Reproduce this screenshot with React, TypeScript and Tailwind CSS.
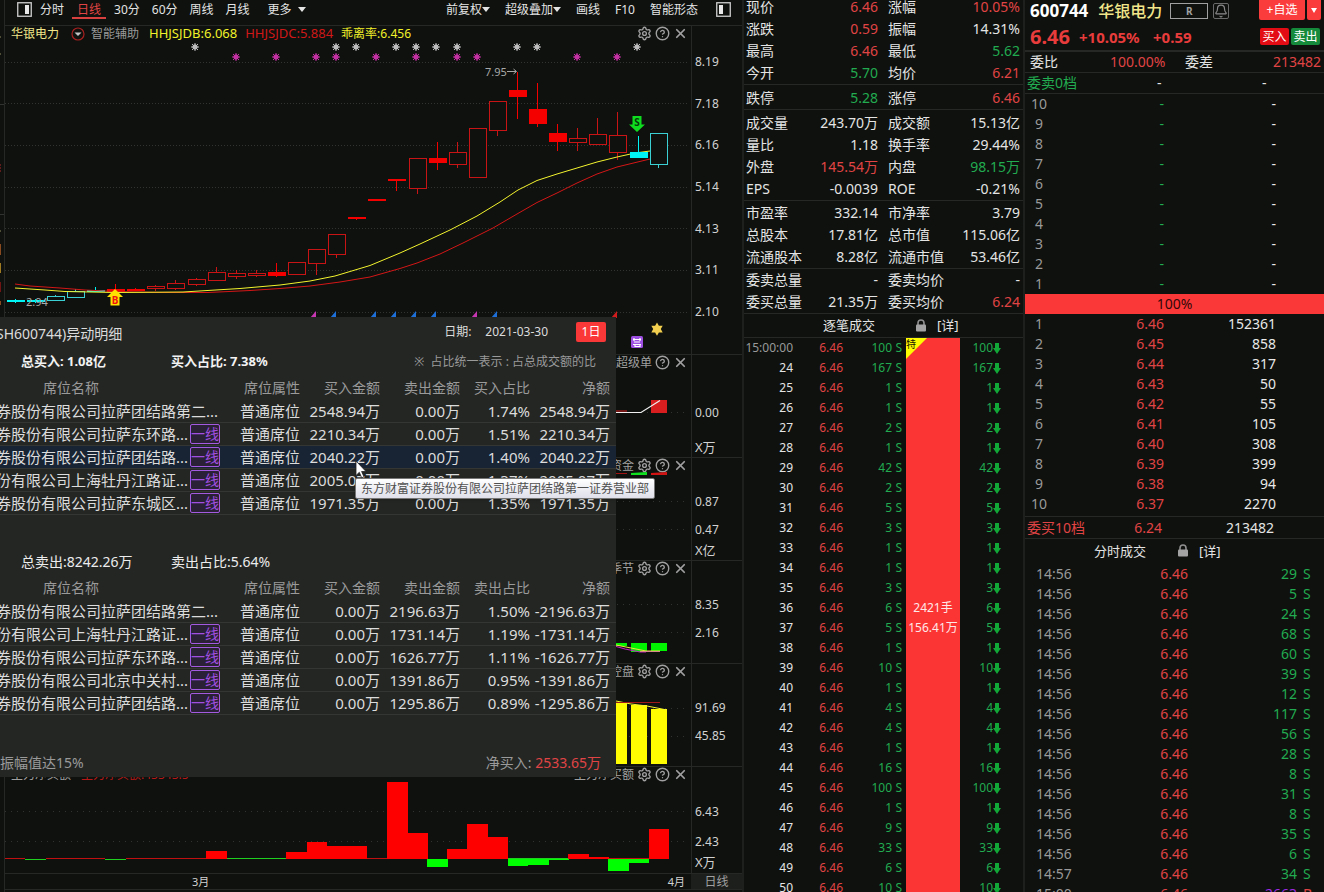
import React from "react";
import { Bell, HelpCircle, Settings, X } from "lucide-react";

type Tone = "red" | "green" | "white";

const toneClass: Record<Tone, string> = {
  red: "text-[#e04444]",
  green: "text-[#22ab50]",
  white: "text-[#e4e4e4]",
};

/* ---------- small shared drawings ---------- */

function Caret() {
  return (
    <svg viewBox="0 0 8 5" className="h-[5px] w-2" aria-hidden="true">
      <path d="M0 0h8L4 5z" fill="currentColor" />
    </svg>
  );
}

function Lock() {
  return (
    <svg viewBox="0 0 12 13" className="h-[13px] w-3" aria-hidden="true">
      <path d="M3 6V4a3 3 0 0 1 6 0v2" fill="none" stroke="#8f8f8f" strokeWidth="1.6" />
      <rect x="1" y="5.5" width="10" height="7" rx="1" fill="#a3a3a3" />
    </svg>
  );
}

function PanelIcon({ side }: { side: "left" | "right" }) {
  return (
    <svg viewBox="0 0 15 15" className="h-[15px] w-[15px]" aria-hidden="true">
      <rect x="0.75" y="0.75" width="13.5" height="13.5" fill="none" stroke="#cfcfcf" strokeWidth="1.3" />
      <rect x={side === "right" ? 8 : 3} y="3" width="4" height="9" fill="#e8e8e8" />
    </svg>
  );
}

/* ---------- chart panes ---------- */

function PaneHeader({
  title,
  gear = true,
  children,
}: {
  title?: string;
  gear?: boolean;
  children?: React.ReactNode;
}) {
  return (
    <div className="flex h-[15px] items-center justify-between pl-1.5 pr-[3px] text-xs leading-[15px] text-[#a0a0a0]">
      <div className="flex items-center gap-2.5 whitespace-nowrap">{children}</div>
      <div className="flex items-center gap-[3px]">
        {title && <span>{title}</span>}
        {gear && (
          <button aria-label="设置">
            <Settings className="h-[15px] w-[15px]" strokeWidth={2.2} />
          </button>
        )}
        <button aria-label="帮助">
          <HelpCircle className="h-[15px] w-[15px]" strokeWidth={2.2} />
        </button>
        <button aria-label="关闭">
          <X className="h-[15px] w-[15px]" strokeWidth={2.8} />
        </button>
      </div>
    </div>
  );
}

function Grid({ ys, dash = "1 2" }: { ys: number[]; dash?: string }) {
  return (
    <g stroke="#303330" strokeDasharray={dash} shapeRendering="crispEdges">
      {ys.map((y) => (
        <line key={y} x1="5" x2="689" y1={y + 0.5} y2={y + 0.5} />
      ))}
    </g>
  );
}

type Candle = { x: number; t: number; b: number; hi?: number; lo?: number; fill?: boolean; c?: boolean };

const candles: Candle[] = [
  { x: 7, t: 300, b: 302, hi: 299, lo: 303, fill: true, c: true },
  { x: 27, t: 300, b: 302, hi: 299, lo: 303, fill: true, c: true },
  { x: 47, t: 296, b: 300, hi: 295, c: true },
  { x: 67, t: 291, b: 297, hi: 289, c: true },
  { x: 87, t: 290, b: 292, hi: 287, fill: true, c: true },
  { x: 107, t: 289, b: 292, hi: 284, fill: true },
  { x: 127, t: 289, b: 291, hi: 288, fill: true },
  { x: 147, t: 286, b: 288, hi: 285, lo: 291 },
  { x: 167, t: 283, b: 288, hi: 280, lo: 290 },
  { x: 188, t: 279, b: 284, hi: 278, lo: 286 },
  { x: 208, t: 272, b: 280, hi: 267 },
  { x: 228, t: 273, b: 276, hi: 270, lo: 279 },
  { x: 248, t: 273, b: 275, hi: 270, lo: 277 },
  { x: 268, t: 272, b: 276, hi: 263, lo: 277, fill: true },
  { x: 288, t: 262, b: 274 },
  { x: 308, t: 249, b: 263, lo: 275 },
  { x: 328, t: 234, b: 254, lo: 258 },
  { x: 348, t: 217, b: 219, lo: 220, fill: true },
  { x: 368, t: 199, b: 201, fill: true },
  { x: 388, t: 179, b: 181, lo: 191, fill: true },
  { x: 409, t: 158, b: 188, lo: 194 },
  { x: 429, t: 158, b: 163, hi: 142, lo: 170, fill: true },
  { x: 449, t: 152, b: 164, hi: 142, lo: 168 },
  { x: 469, t: 128, b: 177 },
  { x: 489, t: 101, b: 130, lo: 136 },
  { x: 509, t: 90, b: 97, hi: 72, lo: 119, fill: true },
  { x: 529, t: 109, b: 124, hi: 83, lo: 127, fill: true },
  { x: 549, t: 133, b: 142, hi: 124, lo: 151, fill: true },
  { x: 569, t: 138, b: 142, hi: 128, lo: 151 },
  { x: 589, t: 134, b: 144, hi: 118 },
  { x: 609, t: 135, b: 152, hi: 112, lo: 160 },
  { x: 630, t: 152, b: 158, hi: 136, fill: true, c: true },
  { x: 650, t: 133, b: 164, lo: 168, c: true },
];

const grayStars = [195, 336, 356, 396, 416, 436, 457, 517, 537, 637];
const pinkStars = [236, 276, 316, 336, 376, 416, 457, 477, 577, 617];
const flags: [number, string][] = [
  [314, "#c536b0"],
  [334, "#1e70d8"],
  [374, "#1e70d8"],
  [394, "#1e70d8"],
  [414, "#1e70d8"],
  [434, "#1e70d8"],
  [475, "#c536b0"],
  [495, "#1e70d8"],
  [615, "#d01c1c"],
];

function Burst({ x, y, color }: { x: number; y: number; color: string }) {
  return (
    <g stroke={color} strokeWidth="1">
      <path d={`M${x - 4} ${y}h8M${x} ${y - 4}v8M${x - 3} ${y - 3}l6 6M${x + 3} ${y - 3}l-6 6`} />
      <circle cx={x} cy={y} r="2.2" fill={color} />
    </g>
  );
}

function CandleChart() {
  return (
    <svg viewBox="5 41 686 313" className="block h-[313px] w-full overflow-visible">
      <Grid ys={[62, 103, 145, 187, 228, 270, 312]} />
      {grayStars.map((x) => (
        <Burst key={x} x={x} y={47} color="#bdbdbd" />
      ))}
      {pinkStars.map((x) => (
        <Burst key={x} x={x} y={57} color="#c530a4" />
      ))}
      <g shapeRendering="crispEdges">
        {candles.map((k) => {
          const color = k.c ? (k.fill ? "#00f4f4" : "#3ad0d4") : k.fill ? "#f40000" : "#c81414";
          const mid = k.x + 8.5;
          return (
            <g key={k.x} stroke={color}>
              {k.hi !== undefined && <line x1={mid} x2={mid} y1={k.hi} y2={k.t} />}
              {k.lo !== undefined && <line x1={mid} x2={mid} y1={k.b} y2={k.lo} />}
              {k.fill ? (
                <rect x={k.x} y={k.t} width="18" height={k.b - k.t} fill={color} stroke="none" />
              ) : (
                <rect x={k.x + 0.5} y={k.t + 0.5} width="17" height={k.b - k.t} fill="#0e110e" />
              )}
            </g>
          );
        })}
      </g>
      <polyline
        points="15,284 30,286 60,288 85,290 115,291.5 160,292.5 208,292.5 250,290.5 280,288.5 310,286 340,282 370,277 400,268.5 417,263 440,254 463,243 493,228 517,214 537,202.5 557,193 577,183 597,174 617,167 650,159"
        fill="none"
        stroke="#d41616"
        strokeWidth="1"
      />
      <polyline
        points="15,288 45,290 65,291.500 115,292.5 183,292 240,288.500 280,285 310,281 335,276 355,270 370,265.5 400,253 420,244 450,230 477,216 500,202 518,190 537,180.5 557,174 577,168 597,162 617,157 635,153 650,151"
        fill="none"
        stroke="#f4f42e"
        strokeWidth="1"
      />
      <path d="M630 152h18v6h-18z" fill="#00f4f4" />
      <path d="M650.500 133.500h17v31h-17z" fill="#0e110e" stroke="#3ad0d4" shapeRendering="crispEdges" />
      <text x="26" y="306" fontSize="11" fill="#a8a8a8">2.94</text>
      <text x="485" y="76" fontSize="11" fill="#a8a8a8">7.95</text>
      <path d="M507 71.500h9M513.500 69l3 2.500l-3 2.500" fill="none" stroke="#a8a8a8" />
      <path d="M115 289l8 8h-3.500v8.500h-9V297H107z" fill="#ffe000" />
      <text x="115" y="304" fontSize="10" fontWeight="700" textAnchor="middle" fill="#f01010">B</text>
      <path d="M632.500 116h9v8.500h3.500l-8 7.500l-8-7.500h3.500z" fill="#0fdc1e" />
      <text x="637" y="125.500" fontSize="10" fontWeight="700" textAnchor="middle" fill="#06380c">S</text>
      {flags.map(([x, color]) => (
        <path key={x} d={`M${x - 4} 318l6 -7v7z`} fill={color} />
      ))}
      <rect x="631" y="336" width="12" height="12" rx="1.500" fill="#9c4fe0" />
      <path d="M633 339.500h8M634 342h6M633 344.500h8M634 338v3M640 338v3M635 344v2.500h5V344" fill="none" stroke="#fff" strokeWidth="1.200" />
      <path d="M657 322.500l1.900 3.300h3.800l-1.900 3.300l1.900 3.300h-3.800l-1.900 3.300l-1.900-3.300h-3.800l1.900-3.300l-1.900-3.300h3.800z" fill="#f2cf4e" />
    </svg>
  );
}

function SuperOrderChart() {
  return (
    <svg viewBox="5 370 686 87" className="block h-[87px] w-full overflow-visible">
      <Grid ys={[412]} dash="1 5" />
      <rect x="651" y="400" width="16" height="13" fill="#d81e1e" />
      <path d="M600 411h27" stroke="#d81e1e" />
      <path d="M600 412.500h41l19-12" fill="none" stroke="#f0f0f0" strokeWidth="1.200" />
    </svg>
  );
}

function FundChart() {
  return (
    <svg viewBox="5 473 686 87" className="block h-[87px] w-full overflow-visible">
      <Grid ys={[501, 529]} dash="1 5" />
      <path d="M600 473.500h27" stroke="#a01414" />
      <path d="M631 473l16-1v3h-16z" fill="#10e020" />
      <path d="M651 473l16-1v3h-16z" fill="#d01414" />
    </svg>
  );
}

function SeasonChart() {
  return (
    <svg viewBox="5 576 686 87" className="block h-[87px] w-full overflow-visible">
      <Grid ys={[604, 632]} dash="1 5" />
      <path d="M611 643h16v3h-16zM631 643h16v9h-16zM651 643h16v8h-16z" fill="#00f400" />
      <path d="M611 645l14 4l15 3h6" fill="none" stroke="#c020c0" strokeWidth="1.200" />
      <path d="M611 644l20 4l15 3h14" fill="none" stroke="#e8e040" strokeWidth="1.200" />
      <path d="M640 651.500h20" stroke="#d88a8a" />
    </svg>
  );
}

function ControlChart() {
  return (
    <svg viewBox="5 679 686 87" className="block h-[87px] w-full overflow-visible">
      <Grid ys={[708, 736]} dash="1 5" />
      <path d="M611 703h16v61h-16zM631 705h16v59h-16zM651 709h16v55h-16z" fill="#fffb00" />
      <path d="M611 700l20 4l16 2l20 4" fill="none" stroke="#f4f42e" />
      <path d="M611 702.500h49" stroke="#a01818" />
    </svg>
  );
}

const netBars: { x: number; w: number; y: number; h: number; up: boolean }[] = [
  { x: 206, w: 21, y: 851, h: 8, up: true },
  { x: 286, w: 21, y: 852, h: 7, up: true },
  { x: 307, w: 20, y: 842, h: 17, up: true },
  { x: 327, w: 40, y: 846, h: 13, up: true },
  { x: 387, w: 21, y: 782, h: 77, up: true },
  { x: 408, w: 20, y: 833, h: 26, up: true },
  { x: 427, w: 21, y: 859, h: 8, up: false },
  { x: 447, w: 20, y: 849, h: 10, up: true },
  { x: 467, w: 21, y: 824, h: 35, up: true },
  { x: 488, w: 20, y: 837, h: 22, up: true },
  { x: 508, w: 20, y: 859, h: 7, up: false },
  { x: 528, w: 21, y: 859, h: 6, up: false },
  { x: 549, w: 20, y: 859, h: 1, up: false },
  { x: 568, w: 21, y: 854, h: 5, up: true },
  { x: 589, w: 20, y: 857, h: 2, up: true },
  { x: 608, w: 21, y: 859, h: 12, up: false },
  { x: 629, w: 20, y: 859, h: 4, up: false },
  { x: 649, w: 20, y: 829, h: 30, up: true },
];

function NetBuyChart() {
  return (
    <svg viewBox="5 782 686 91" className="block h-[91px] w-full overflow-visible">
      <Grid ys={[811, 841]} dash="1 5" />
      <path d="M5 858.500h20M46 858.500h59M126 858.500h101M267 858.500h160M447 858.500h61M568 858.500h101" stroke="#c01010" shapeRendering="crispEdges" />
      <path d="M25 859.500h21M105 859.500h21M227 858.500h60M508 858.500h60" stroke="#20d020" shapeRendering="crispEdges" />
      <g shapeRendering="crispEdges">
        {netBars.map((b) => (
          <rect key={b.x} x={b.x} y={b.y} width={b.w} height={b.h} fill={b.up ? "#ff0000" : "#00ff00"} />
        ))}
      </g>
    </svg>
  );
}

function Pane({ children, axis }: { children: React.ReactNode; axis: React.ReactNode }) {
  return (
    <section className="flex border-b border-[#262826]">
      <div className="min-w-0 flex-1">{children}</div>
      <div className="flex w-[51px] flex-col border-l border-[#262826] pl-[3px] text-xs leading-5 text-[#d2d2d2]">
        {axis}
      </div>
    </section>
  );
}

const priceScale = ["8.19", "7.18", "6.16", "5.14", "4.13", "3.11", "2.10"];

function ChartColumn() {
  return (
    <main className="relative flex min-w-0 flex-1">
      <div className="w-[5px] shrink-0 border-r border-[#262826]">
        <svg viewBox="0 0 4 310" className="block h-[310px] w-1" aria-hidden="true">
          <path d="M0 104.500h4M0 214.500h4" stroke="#303330" />
          <path d="M0 165h1M0 168h1M0 171h1" stroke="#b02828" />
          <path d="M0 37h1M0 54h1M0 231h1" stroke="#909060" />
          <path d="M0 244h1v11H0z" fill="#8a4a20" />
          <path d="M0 263h1v10H0z" fill="#a07a20" />
          <path d="M0 282h1v10H0z" fill="#701414" />
          <path d="M0 301h1v4H0z" fill="#8a4a20" />
        </svg>
      </div>
      <div className="min-w-0 flex-1">
        <nav className="flex h-[26px] justify-between border-b border-[#262826] pb-1.5 pl-3 pr-[11px] text-xs leading-[19px] text-[#e4e4e4]">
          <div className="flex items-center gap-3">
            <button aria-label="左侧栏" className="-mr-1">
              <PanelIcon side="right" />
            </button>
            <button>分时</button>
            <button className="-mx-1 h-[19px] border-b-2 border-[#d84040] px-[5px] text-[#e04444]">日线</button>
            <button>30分</button>
            <button>60分</button>
            <button>周线</button>
            <button>月线</button>
            <button className="ml-1.5 flex items-center gap-1.5">
              更多
              <Caret />
            </button>
          </div>
          <div className="flex items-center gap-[15px]">
            <button className="flex items-center">
              前复权
              <Caret />
            </button>
            <button className="flex items-center">
              超级叠加
              <Caret />
            </button>
            <button>画线</button>
            <button>F10</button>
            <button>智能形态</button>
            <button aria-label="右侧栏" className="ml-[3px]">
              <PanelIcon side="left" />
            </button>
          </div>
        </nav>

        <Pane
          axis={
            <div className="flex h-[296px] flex-col justify-between pt-[26px]">
              {priceScale.map((p) => (
                <span key={p}>{p}</span>
              ))}
            </div>
          }
        >
          <PaneHeader>
            <span className="text-[#f2e68a]">华银电力</span>
            <svg viewBox="0 0 14 14" className="ml-0.5 h-3.5 w-3.5" aria-hidden="true">
              <circle cx="7" cy="7" r="6" fill="none" stroke="#a82020" strokeWidth="1.200" />
              <path d="M3.500 5.500h7L7 9z" fill="#c4c4c4" />
            </svg>
            <span className="-ml-1 text-[#9a9a9a]">智能辅助</span>
            <span className="text-[13px] text-[#f2f22a]">HHJSJDB:6.068</span>
            <span className="-ml-0.5 text-[13px] text-[#d01818]">HHJSJDC:5.884</span>
            <span className="-ml-0.5 text-[#f2f22a]">乖离率:6.456</span>
          </PaneHeader>
          <CandleChart />
        </Pane>

        <Pane axis={<><span className="pt-12">0.00</span><span className="pt-3.5 text-[13px]">X万</span></>}>
          <PaneHeader title="超级单" gear={false} />
          <SuperOrderChart />
        </Pane>

        <Pane
          axis={
            <>
              <span className="pt-[34px]">0.87</span>
              <span className="pt-2">0.47</span>
              <span className="text-[13px]">X亿</span>
            </>
          }
        >
          <PaneHeader title="资金" />
          <FundChart />
        </Pane>

        <Pane axis={<><span className="pt-[34px]">8.35</span><span className="pt-2">2.16</span></>}>
          <PaneHeader title="季节" />
          <SeasonChart />
        </Pane>

        <Pane axis={<><span className="pt-[34px]">91.69</span><span className="pt-2">45.85</span></>}>
          <PaneHeader title="控盘" />
          <ControlChart />
        </Pane>

        <Pane
          axis={
            <>
              <span className="pt-[35px]">6.43</span>
              <span className="pt-2.5">2.43</span>
              <span className="text-[13px]">X万</span>
            </>
          }
        >
          <PaneHeader title="主力净买额">
            <span>主力净买额</span>
            <span className="text-[#b81818]">主力净买额:43343.5</span>
          </PaneHeader>
          <NetBuyChart />
        </Pane>

        <div className="flex h-4 border-b border-[#262826] text-[11px] leading-4 text-[#d2d2d2]">
          <div className="flex flex-1 justify-between pl-[187px] pr-1.5">
            <span>3月</span>
            <span>4月</span>
          </div>
          <button className="w-[51px] bg-[#1d1f1d] text-xs leading-4 text-[#a0a0a0]">日线</button>
        </div>
      </div>
      <SeatPopup />
    </main>
  );
}

/* ---------- broker seat popup ---------- */

type Seat = { name: string; tag?: boolean; buy: string; sell: string; pct: string; net: string; active?: boolean };

const buySeats: Seat[] = [
  { name: "券股份有限公司拉萨团结路第二...", buy: "2548.94万", sell: "0.00万", pct: "1.74%", net: "2548.94万" },
  { name: "券股份有限公司拉萨东环路...", tag: true, buy: "2210.34万", sell: "0.00万", pct: "1.51%", net: "2210.34万" },
  { name: "券股份有限公司拉萨团结路...", tag: true, buy: "2040.22万", sell: "0.00万", pct: "1.40%", net: "2040.22万", active: true },
  { name: "份有限公司上海牡丹江路证...", tag: true, buy: "2005.07万", sell: "0.00万", pct: "1.37%", net: "2005.07万" },
  { name: "券股份有限公司拉萨东城区...", tag: true, buy: "1971.35万", sell: "0.00万", pct: "1.35%", net: "1971.35万" },
];

const sellSeats: Seat[] = [
  { name: "券股份有限公司拉萨团结路第二...", buy: "0.00万", sell: "2196.63万", pct: "1.50%", net: "-2196.63万" },
  { name: "份有限公司上海牡丹江路证...", tag: true, buy: "0.00万", sell: "1731.14万", pct: "1.19%", net: "-1731.14万" },
  { name: "券股份有限公司拉萨东环路...", tag: true, buy: "0.00万", sell: "1626.77万", pct: "1.11%", net: "-1626.77万" },
  { name: "券股份有限公司北京中关村...", tag: true, buy: "0.00万", sell: "1391.86万", pct: "0.95%", net: "-1391.86万" },
  { name: "券股份有限公司拉萨团结路...", tag: true, buy: "0.00万", sell: "1295.86万", pct: "0.89%", net: "-1295.86万" },
];

function SeatTable({ seats, pctLabel }: { seats: Seat[]; pctLabel: string }) {
  return (
    <table className="-ml-1 w-[620px] table-fixed border-separate border-spacing-0 whitespace-nowrap text-right text-[15px] leading-[22px] text-[#dcdcdc]">
      <colgroup>
        <col className="w-[225px]" />
        <col className="w-[79px]" />
        <col className="w-20" />
        <col className="w-20" />
        <col className="w-[70px]" />
        <col />
      </colgroup>
      <thead>
        <tr className="h-6 text-sm text-[#9a9a9a]">
          <th className="pr-[75px] text-center font-normal">席位名称</th>
          <th className="font-normal">席位属性</th>
          <th className="font-normal">买入金额</th>
          <th className="font-normal">卖出金额</th>
          <th className="font-normal">{pctLabel}</th>
          <th className="pr-1.5 font-normal">净额</th>
        </tr>
      </thead>
      <tbody className="[&_td]:border-b [&_td]:border-[#333633]">
        {seats.map((s) => (
          <tr key={s.name} className={s.active ? "h-[23px] bg-[#182434]" : "h-[23px]"}>
            <td>
              <div className="flex items-center gap-0.5">
                <span>{s.name}</span>
                {s.tag && (
                  <span className="h-5 w-[30px] rounded-[2px] border border-[#a45ae0] bg-[#2b2136] text-center text-sm leading-[18px] text-[#a04fe0]">
                    一线
                  </span>
                )}
              </div>
            </td>
            <td>普通席位</td>
            <td>{s.buy}</td>
            <td>{s.sell}</td>
            <td>{s.pct}</td>
            <td className="pr-1.5">{s.net}</td>
          </tr>
        ))}
      </tbody>
    </table>
  );
}

function SeatPopup() {
  return (
    <div role="dialog" aria-label="异动明细" className="absolute left-0 top-[317px] w-[616px] bg-[#242624]">
      <div className="overflow-hidden">
        <header className="flex h-[30px] items-center justify-between pr-2.5">
          <h2 className="-ml-1 pt-1 text-sm text-[#dcdcdc]">SH600744)异动明细</h2>
          <div className="flex items-center text-xs text-[#dcdcdc]">
            <span>日期:</span>
            <time className="ml-3.5">2021-03-30</time>
            <button className="ml-7 h-5 w-[30px] rounded-[2px] bg-[#fb3838] text-white">1日</button>
          </div>
        </header>
        <div className="flex h-[29px] items-center pl-[21px] pr-5 text-[13px] text-[#f2f2f2]">
          <strong className="w-[150px]">总买入: 1.08亿</strong>
          <strong className="flex-1">买入占比: 7.38%</strong>
          <span className="text-xs text-[#9a9a9a]">※&nbsp; 占比统一表示 : 占总成交额的比</span>
        </div>
        <SeatTable seats={buySeats} pctLabel="买入占比" />
        <div className="mt-8 flex h-[29px] items-center pl-[21px] text-sm text-[#ececec]">
          <span className="w-[150px]">总卖出:8242.26万</span>
          <span>卖出占比:5.64%</span>
        </div>
        <SeatTable seats={sellSeats} pctLabel="卖出占比" />
        <footer className="mt-[34px] flex h-7 items-center justify-between pr-[15px] text-sm text-[#9a9a9a]">
          <span>振幅值达15%</span>
          <span>
            净买入: <span className="text-[#e04444]">2533.65万</span>
          </span>
        </footer>
      </div>
      <div
        role="tooltip"
        className="absolute left-[355px] top-[161px] whitespace-nowrap rounded-[2px] border border-[#767676] bg-gradient-to-b from-white to-[#dfe0ea] px-[5px] text-xs leading-[19px] text-[#505050] shadow"
      >
        东方财富证券股份有限公司拉萨团结路第一证券营业部
      </div>
      <svg viewBox="0 0 12 19" className="absolute left-[355px] top-[143px] h-[19px] w-3" aria-hidden="true">
        <path d="M1 1v14.500l3.300-3.200l2.400 5.500l2.300-1l-2.400-5.300h4.400z" fill="#fff" stroke="#222" strokeWidth="0.800" />
      </svg>
    </div>
  );
}

/* ---------- quote statistics and tick list ---------- */

type Stat = [string, string, Tone];

const statGroups: { pad: string; rows: [Stat, Stat][] }[] = [
  {
    pad: "-mt-1",
    rows: [
      [["现价", "6.46", "red"], ["涨幅", "10.05%", "red"]],
      [["涨跌", "0.59", "red"], ["振幅", "14.31%", "white"]],
      [["最高", "6.46", "red"], ["最低", "5.62", "green"]],
      [["今开", "5.70", "green"], ["均价", "6.21", "red"]],
    ],
  },
  { pad: "pt-0.5", rows: [[["跌停", "5.28", "green"], ["涨停", "6.46", "red"]]] },
  {
    pad: "pt-0.5",
    rows: [
      [["成交量", "243.70万", "white"], ["成交额", "15.13亿", "white"]],
      [["量比", "1.18", "white"], ["换手率", "29.44%", "white"]],
      [["外盘", "145.54万", "red"], ["内盘", "98.15万", "green"]],
      [["EPS", "-0.0039", "white"], ["ROE", "-0.21%", "white"]],
    ],
  },
  {
    pad: "pt-px",
    rows: [
      [["市盈率", "332.14", "white"], ["市净率", "3.79", "white"]],
      [["总股本", "17.81亿", "white"], ["总市值", "115.06亿", "white"]],
      [["流通股本", "8.28亿", "white"], ["流通市值", "53.46亿", "white"]],
    ],
  },
  {
    pad: "pt-0",
    rows: [
      [["委卖总量", "-", "white"], ["委卖均价", "-", "white"]],
      [["委买总量", "21.35万", "white"], ["委买均价", "6.24", "red"]],
    ],
  },
];

const tickQty = [100, 167, 1, 1, 2, 1, 42, 2, 5, 3, 1, 1, 3, 6, 5, 1, 10, 1, 4, 4, 1, 16, 100, 1, 9, 33, 6, 10];

function StatCell({ stat }: { stat: Stat }) {
  return (
    <div className="flex h-[22px] justify-between">
      <dt>{stat[0]}</dt>
      <dd className={toneClass[stat[2]]}>{stat[1]}</dd>
    </div>
  );
}

function QuoteColumn() {
  return (
    <section className="flex w-[281px] shrink-0 flex-col border-l-2 border-[#1e201e]">
      {statGroups.map((g, i) => (
        <div key={i} className="border-b border-[#262826]">
          <dl className={`grid grid-cols-2 gap-x-2.5 pl-0.5 pr-[3px] text-sm leading-[22px] text-[#e4e4e4] ${g.pad}`}>
            {g.rows.map(([a, b]) => (
              <React.Fragment key={a[0]}>
                <StatCell stat={a} />
                <StatCell stat={b} />
              </React.Fragment>
            ))}
          </dl>
        </div>
      ))}
      <header className="flex h-6 items-center border-b border-[#262826] pl-[79px] text-[13px] text-[#e4e4e4]">
        <h2>逐笔成交</h2>
        <span className="ml-10">
          <Lock />
        </span>
        <a href="#ticks" className="ml-2.5">[详]</a>
      </header>
      <div id="ticks" className="flex min-h-0 flex-1 overflow-hidden text-xs leading-5">
        <table className="w-[162px] table-fixed self-start text-right">
          <tbody>
            {tickQty.map((q, i) => (
              <tr key={i} className="h-5">
                <td className={i === 0 ? "w-[49px] text-[#9a9a9a]" : "w-[49px] text-[#e4e4e4]"}>
                  {i === 0 ? "15:00:00" : 23 + i}
                </td>
                <td className="w-[50px] text-[#e04444]">6.46</td>
                <td className="text-[#22ab50]">{q}</td>
                <td className="w-[14px] pr-1 text-[#22ab50]">S</td>
              </tr>
            ))}
          </tbody>
        </table>
        <div className="w-[54px] bg-[#fb3434] text-center text-[#ffe8e8]">
          <div className="h-[260px] leading-3">
            <div className="relative h-[21px] w-[21px]">
              <svg viewBox="0 0 21 21" className="h-full w-full" aria-hidden="true">
                <path d="M0 0h21L0 21z" fill="#fffb00" />
              </svg>
              <span className="absolute left-0 top-0 text-[10px] leading-3 text-[#202000]">特</span>
            </div>
          </div>
          <p>2421手</p>
          <p>156.41万</p>
        </div>
        <ol className="w-[41px] text-[#22ab50]">
          {tickQty.map((q, i) => (
            <li key={i} className="flex h-5 items-center justify-end">
              {q}
              <svg viewBox="0 0 8 11" className="h-[11px] w-2" aria-hidden="true">
                <path d="M2 0h4v5h2L4 11L0 5h2z" fill="#12a838" />
              </svg>
            </li>
          ))}
        </ol>
      </div>
    </section>
  );
}

/* ---------- order book ---------- */

const bids: [number, string, number][] = [
  [1, "6.46", 152361],
  [2, "6.45", 858],
  [3, "6.44", 317],
  [4, "6.43", 50],
  [5, "6.42", 55],
  [6, "6.41", 105],
  [7, "6.40", 308],
  [8, "6.39", 399],
  [9, "6.38", 94],
  [10, "6.37", 2270],
];
const askLevels = [10, 9, 8, 7, 6, 5, 4, 3, 2, 1];

const trades: [string, number, string][] = [
  ["14:56", 29, "S"],
  ["14:56", 5, "S"],
  ["14:56", 24, "S"],
  ["14:56", 68, "S"],
  ["14:56", 60, "S"],
  ["14:56", 39, "S"],
  ["14:56", 12, "S"],
  ["14:56", 117, "S"],
  ["14:56", 56, "S"],
  ["14:56", 28, "S"],
  ["14:56", 8, "S"],
  ["14:56", 31, "S"],
  ["14:56", 8, "S"],
  ["14:56", 35, "S"],
  ["14:56", 6, "S"],
  ["14:57", 34, "S"],
  ["15:00", 2663, "B"],
];

function BookRow({ level, price, volume, tone }: { level: number; price: string; volume: React.ReactNode; tone: Tone }) {
  return (
    <tr className="h-5">
      <td className="w-7 text-center text-[#9a9a9a]">{level}</td>
      <td className={`w-[111px] text-right ${toneClass[tone]}`}>{price}</td>
      <td className="w-28 text-right text-[#e8e8e8]">{volume}</td>
      <td />
    </tr>
  );
}

function BookColumn() {
  return (
    <aside className="w-[301px] shrink-0 border-l-2 border-[#1e201e] text-sm leading-5 text-[#e4e4e4]">
      <header className="flex h-[52px] justify-between border-b-2 border-[#262826] pl-[5px] pr-[3px]">
        <div>
          <div className="flex h-[22px] items-center">
            <span className="text-[17px] font-bold text-white">600744</span>
            <h1 className="ml-2.5 text-base font-medium text-[#f2e68a]">华银电力</h1>
            <span className="ml-2 h-4 w-[38px] border border-[#a0a0a0] text-center text-[10px] font-bold leading-[15px] text-[#a0a0a0]">
              R
            </span>
            <button
              aria-label="提醒"
              className="ml-[5px] flex h-4 w-4 items-center justify-center rounded-[2px] border border-[#6a6a6a] text-[#8a8a8a]"
            >
              <Bell className="h-3.5 w-3.5" />
            </button>
          </div>
          <div className="flex h-[30px] items-center font-bold text-[#e83c3c]">
            <span className="w-[49px] text-xl">6.46</span>
            <span className="w-[74px] text-[15px]">+10.05%</span>
            <span className="text-[15px]">+0.59</span>
          </div>
        </div>
        <div className="text-xs text-white">
          <div className="flex gap-0.5">
            <button className="h-5 w-[46px] rounded-b-[2px] bg-[#fb3c3c]">+自选</button>
            <button aria-label="更多自选" className="flex h-5 w-3.5 items-center justify-center rounded-b-[2px] bg-[#fb3c3c]">
              <svg viewBox="0 0 6 5" className="h-[5px] w-1.5" aria-hidden="true">
                <path d="M0 0h6L3 5z" fill="currentColor" />
              </svg>
            </button>
          </div>
          <div className="flex gap-0.5 pl-px pt-2">
            <button className="h-[17px] w-[29px] rounded-[2px] bg-[#e40c14] leading-[17px]">买入</button>
            <button className="h-[17px] w-[29px] rounded-[2px] bg-[#148a3a] leading-[17px]">卖出</button>
          </div>
        </div>
      </header>
      <div className="flex h-[21px] items-center border-b border-[#262826] pl-[5px] pr-[3px]">
        <span className="w-20">委比</span>
        <span className="w-[75px] text-[#e04444]">100.00%</span>
        <span className="flex-1">委差</span>
        <span className="text-[#e04444]">213482</span>
      </div>
      <div className="flex h-[21px] items-center border-b border-[#262826] pl-0.5">
        <span className="w-[130px] text-[#22ab50]">委卖0档</span>
        <span className="w-[105px]">-</span>
        <span>-</span>
      </div>
      <table className="w-full table-fixed">
        <tbody>
          {askLevels.map((n) => (
            <BookRow key={n} level={n} price="-" volume="-" tone="green" />
          ))}
        </tbody>
      </table>
      <div className="h-5 bg-[#fb3838] text-center text-[#300808]">100%</div>
      <table className="w-full table-fixed">
        <tbody>
          {bids.map(([n, price, vol]) => (
            <BookRow key={n} level={n} price={price} volume={vol} tone="red" />
          ))}
        </tbody>
      </table>
      <div className="mt-0.5 flex h-[23px] items-center border-y border-[#262826] pl-0.5">
        <span className="w-[76px] text-[#e04444]">委买10档</span>
        <span className="w-[59px] text-right text-[#e04444]">6.24</span>
        <span className="w-28 text-right">213482</span>
      </div>
      <header className="flex h-[25px] items-center pb-0.5 pl-[69px] text-[13px]">
        <h2>分时成交</h2>
        <span className="ml-[31px]">
          <Lock />
        </span>
        <a href="#trades" className="ml-2.5">[详]</a>
      </header>
      <table id="trades" className="w-full table-fixed text-right">
        <tbody>
          {trades.map(([time, qty, side], i) => (
            <tr key={i} className="h-5">
              <td className="w-[60px] pl-[11px] text-left text-[#9a9a9a]">{time}</td>
              <td className="w-[103px] text-[#e04444]">6.46</td>
              <td className={side === "B" ? "w-[109px] text-[#9a2ae0]" : "w-[109px] text-[#22ab50]"}>{qty}</td>
              <td className={side === "B" ? "pl-1.5 text-left text-[#e04444]" : "pl-1.5 text-left text-[#22ab50]"}>{side}</td>
            </tr>
          ))}
        </tbody>
      </table>
    </aside>
  );
}

export default function App() {
  return (
    <div className="flex h-screen min-w-[1200px] overflow-hidden bg-[#0e110e] font-['Noto_Sans','Noto_Sans_CJK_SC',sans-serif]">
      <ChartColumn />
      <QuoteColumn />
      <BookColumn />
    </div>
  );
}
